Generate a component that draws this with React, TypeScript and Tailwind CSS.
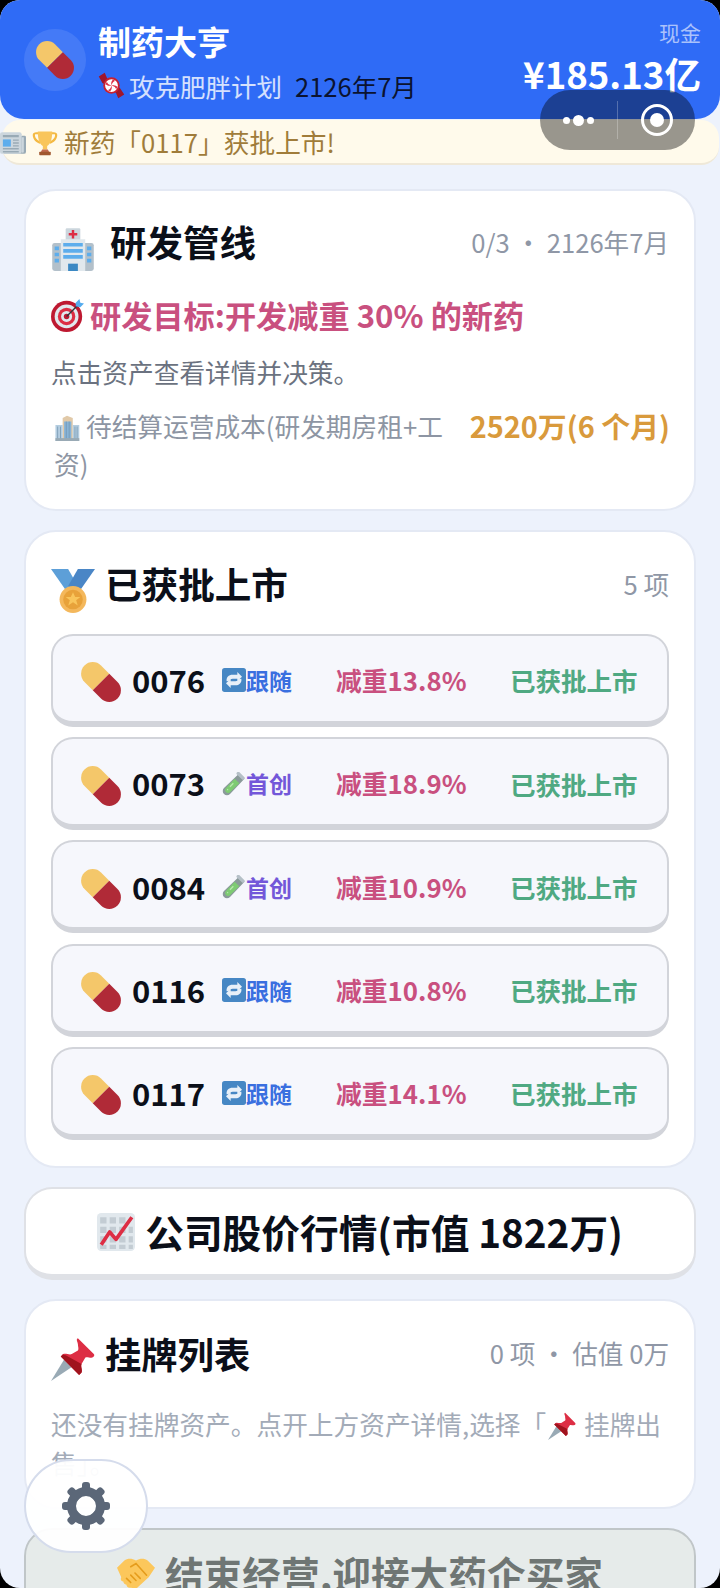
import React from "react";

const Pill = ({ className }: { className?: string }) => (
  <svg viewBox="0 0 36 36" className={className}>
    <g transform="rotate(45 18 18)">
      <path d="M18 8H8a10 10 0 0 0 0 20h10z" fill="#f4c76a" />
      <path d="M18 8h10a10 10 0 0 1 0 20H18z" fill="#b02a37" />
    </g>
  </svg>
);

const Candy = ({ className }: { className?: string }) => (
  <svg viewBox="0 0 36 36" className={className}>
    <path d="M1 6l8-5 3 7 10 10 7 3 6 9-8 5-3-7-10-10-8-3z" fill="#a0162b" />
    <circle cx="18" cy="18" r="11" fill="#c9202f" />
    <circle cx="18" cy="18" r="8.500" fill="#fff" />
    <path d="M18 18c-1-4 0-6 2-8l3 2c-2 0-4 2-5 6zm0 0c4-1 6 0 8 2l-2 3c0-2-2-4-6-5zm0 0c1 4 0 6-2 8l-3-2c2 0 4-2 5-6zm0 0c-4 1-6 0-8-2l2-3c0 2 2 4 6 5z" fill="#dd2e44" />
  </svg>
);

const Newspaper = ({ className }: { className?: string }) => (
  <svg viewBox="0 0 36 36" className={className}>
    <path d="M30 8h4a2 2 0 0 1 2 2v20a3 3 0 0 1-3 3H5z" fill="#99aab5" />
    <rect x="0" y="3" width="30" height="30" rx="3" fill="#ccd6dd" />
    <path d="M4 7h22v3H4z" fill="#99aab5" />
    <rect x="4" y="13" width="11" height="10" fill="#5dadec" />
    <path d="M18 13h8v2h-8zM18 17h8v2h-8zM18 21h8v2h-8zM4 25h22v2H4zM4 29h22v2H4z" fill="#99aab5" />
    <path d="M30 10h3v20a1.500 1.500 0 0 1-3 0z" fill="#ccd6dd" />
  </svg>
);

const Trophy = ({ className }: { className?: string }) => (
  <svg viewBox="0 0 36 36" className={className}>
    <path d="M6 3h24c3 0 5 1 5 4 0 6-5 11-10 12l-1-3c4-1 8-5 8-9 0-1-1-1-2-1H6C5 6 4 6 4 7c0 4 4 8 8 9l-1 3C6 18 1 13 1 7c0-3 2-4 5-4z" fill="#f4b942" />
    <path d="M8 2h20c0 12-3 18-7 20v5h-6v-5C11 20 8 14 8 2z" fill="#f9c55b" />
    <path d="M14 27h8l2 4H12z" fill="#c1694f" />
    <rect x="10" y="30" width="16" height="5" rx="1" fill="#a0572f" />
  </svg>
);

const Hospital = ({ className }: { className?: string }) => (
  <svg viewBox="0 0 36 36" className={className}>
    <path d="M13 1h10a1 1 0 0 1 1 1v9H12V2a1 1 0 0 1 1-1z" fill="#ccd6dd" />
    <path d="M17 2.500h2v2.500h2.500v2H19v2.500h-2V7h-2.500V5H17z" fill="#dd2e44" />
    <path d="M1 15a2 2 0 0 1 2-2h30a2 2 0 0 1 2 2v19a2 2 0 0 1-2 2H3a2 2 0 0 1-2-2z" fill="#b3c0ca" />
    <path d="M8 10h20v26H8z" fill="#e1e8ed" />
    <path d="M10 13h16v3H10zM10 18h16v3H10zM10 23h16v3H10zM3 16h3.500v3H3zM3 21h3.500v3H3zM3 26h3.500v3H3zM29.500 16H33v3h-3.500zM29.500 21H33v3h-3.500zM29.500 26H33v3h-3.500z" fill="#5dadec" />
    <path d="M14 30h8v6h-8z" fill="#3b88c3" />
  </svg>
);

const Target = ({ className }: { className?: string }) => (
  <svg viewBox="0 0 36 36" className={className}>
    <circle cx="17" cy="19" r="17" fill="#be1931" />
    <circle cx="17" cy="19" r="13" fill="#e1e8ed" />
    <circle cx="17" cy="19" r="9.500" fill="#dd2e44" />
    <circle cx="17" cy="19" r="6" fill="#e1e8ed" />
    <circle cx="17" cy="19" r="3" fill="#be1931" />
    <path d="M17 19L30 6" stroke="#31373d" strokeWidth="1.500" />
    <path d="M27 4l4-4 1 4 4 1-4 4-5-1z" fill="#55acee" />
  </svg>
);

const Office = ({ className }: { className?: string }) => (
  <svg viewBox="0 0 36 36" className={className}>
    <path d="M12 4l6-3 8 3v32H12z" fill="#e1c9a8" />
    <path d="M14 9h10v25H14z" fill="#88b4d8" />
    <path d="M2 14h10v22H2zM26 14h9v22h-9z" fill="#b4cde0" />
    <path d="M5 16v18M9 16v18M29 16v18M32 16v18M17 9v25M21 9v25" stroke="#6f93ad" strokeWidth="1" />
    <path d="M2 32h33v4H2z" fill="#99aab5" />
  </svg>
);

const Medal = ({ className }: { className?: string }) => (
  <svg viewBox="0 0 36 36" className={className}>
    <path d="M0 0h14l8 14-8 6z" fill="#5d9fd8" />
    <path d="M36 0H22l-8 14 8 6z" fill="#4a86c6" />
    <circle cx="18" cy="25" r="11" fill="#f4b85c" />
    <circle cx="18" cy="25" r="8" fill="#e8a23a" />
    <path d="M18 19l1.800 4h4.200l-3.400 2.600 1.300 4.200-3.900-2.600-3.900 2.600 1.300-4.200L12 23h4.200z" fill="#f9c55b" />
  </svg>
);

const Repeat = ({ className }: { className?: string }) => (
  <svg viewBox="0 0 36 36" className={className}>
    <rect width="36" height="36" rx="4" fill="#4687c4" />
    <path d="M7 20c-1-6 3-10 9-10h7V6l7 7-7 7v-4h-7c-3 0-4 1-5 3z" fill="#e8f0f8" />
    <path d="M29 16c1 6-3 10-9 10h-7v4l-7-7 7-7v4h7c3 0 4-1 5-3z" fill="#e8f0f8" />
  </svg>
);

const TestTube = ({ className }: { className?: string }) => (
  <svg viewBox="0 0 36 36" className={className}>
    <path d="M25 3l8 8L12 33a6 6 0 0 1-9-9z" fill="#8a9a9a" />
    <path d="M19 10l7 7-15 14a4.500 4.500 0 0 1-6-6z" fill="#7ecb73" />
    <rect x="21" y="3" width="15" height="5" rx="2" transform="rotate(45 28 5)" fill="#b5c0c7" />
    <path d="M12 22l5-5M8 27l1-1" stroke="#b8e8ae" strokeWidth="2" />
  </svg>
);

const Chart = ({ className }: { className?: string }) => (
  <svg viewBox="0 0 36 36" className={className}>
    <rect width="36" height="36" rx="4" fill="#e1e8ed" />
    <path d="M3 4h6v6H3zM12 4h6v6h-6zM21 4h6v6h-6zM3 13h6v6H3zM12 13h6v6h-6zM21 13h6v6h-6zM3 22h6v6H3zM12 22h6v6h-6zM21 22h6v6h-6zM30 13h4v6h-4zM30 22h4v6h-4zM3 30h6v4H3zM12 30h6v4h-6zM21 30h6v4h-6zM30 30h4v4h-4z" fill="#c3ccd3" />
    <path d="M4 30l8-12 6 7L33 4" fill="none" stroke="#dd2e44" strokeWidth="3.500" strokeLinejoin="round" />
  </svg>
);

const Pushpin = ({ className }: { className?: string }) => (
  <svg viewBox="0 0 36 36" className={className}>
    <path d="M0 36l11-18 7 6z" fill="#99aab5" />
    <path d="M22 1l13 13c1 1 0 3-2 3-2 0-4-1-5 0l-3 5c-1 2 1 5 0 7l-2 2L8 16l2-2c2-1 5 1 7 0l5-3c1-1 0-3 0-5s-2-4 0-5z" fill="#dd2e44" />
    <path d="M8 16l15 15 2-2c1-2-1-5 0-7L12 15c-2 0-3-1-2-1z" fill="#a0141e" />
  </svg>
);

const Handshake = ({ className }: { className?: string }) => (
  <svg viewBox="0 0 36 36" className={className}>
    <path d="M0 14l7-7c3-2 7-2 11 0 4-2 8-2 11 0l7 7-6 9-12 11c-2 1-4 0-4-1l-2 0c-2 0-3-2-3-3-2 0-3-2-3-3-2 0-3-2-2-4z" fill="#fcc75b" />
    <path d="M13 13l5-3 10 11M9 24l4 4M13 21l5 5M17 19l5 5" fill="none" stroke="#e59c1c" strokeWidth="1.500" strokeLinecap="round" />
  </svg>
);

const Gear = ({ className }: { className?: string }) => (
  <svg viewBox="0 0 48 48" className={className}>
    {[0, 45, 90, 135, 180, 225, 270, 315].map((deg) => (
      <rect key={deg} x="20" y="0" width="8" height="14" rx="3" fill="#5b6778" transform={`rotate(${deg} 24 24)`} />
    ))}
    <circle cx="24" cy="24" r="14.500" fill="none" stroke="#5b6778" strokeWidth="9" />
  </svg>
);

const drugs = [
  { id: "0076", kind: "follow", change: "减重13.8%" },
  { id: "0073", kind: "first", change: "减重18.9%" },
  { id: "0084", kind: "first", change: "减重10.9%" },
  { id: "0116", kind: "follow", change: "减重10.8%" },
  { id: "0117", kind: "follow", change: "减重14.1%" },
];

function DrugRow({ id, kind, change }: { id: string; kind: string; change: string }) {
  return (
    <div className="flex h-[93px] items-center rounded-[22px] border-2 border-b-[6px] border-[#d2d4da] bg-[#f6f7fc] pl-[27px] pt-[4px]">
      <Pill className="h-[42px] w-[42px] shrink-0 translate-y-[2px]" />
      <div className="ml-[10px] w-[90px] text-[31px] font-bold text-[#0b0f19]">{id}</div>
      {kind === "follow" ? (
        <div className="flex w-[114px] items-center text-[23px] font-bold text-[#3a6fe0]">
          <Repeat className="h-[24px] w-[24px]" />
          跟随
        </div>
      ) : (
        <div className="flex w-[114px] items-center text-[23px] font-bold text-[#7357d9]">
          <TestTube className="h-[24px] w-[24px]" />
          首创
        </div>
      )}
      <div className="w-[174px] text-[25.800px] font-bold text-[#c9507f]">{change}</div>
      <div className="text-[25.500px] font-bold text-[#4fa982]">已获批上市</div>
    </div>
  );
}

export default function App() {
  return (
    <div className="h-[1588px] w-[720px] overflow-hidden bg-black font-['Noto_Sans_CJK_SC','Noto_Sans',sans-serif]">
      <div className="relative h-full overflow-hidden rounded-[20px] bg-[#edf2fc]">
        {/* Header */}
        <div className="flex h-[119px] items-center justify-between rounded-b-[24px] bg-[#2f6bf6] pl-[24px] pr-[19px]">
          <div className="flex items-center gap-[12px]">
            <div className="flex h-[62px] w-[62px] items-center justify-center rounded-full bg-white/10">
              <Pill className="h-[40px] w-[40px]" />
            </div>
            <div className="flex flex-col pt-[3px]">
              <div className="text-[33px] font-bold leading-[46px] text-white">制药大亨</div>
              <div className="mt-[3px] flex items-center text-[25.500px] leading-[38px]">
                <Candy className="mr-[4px] h-[27px] w-[27px]" />
                <span className="text-white/80">攻克肥胖计划</span>
                <span className="ml-[13px] text-[#0b1330]">2126年7月</span>
              </div>
            </div>
          </div>
          <div className="flex flex-col items-end">
            <div className="-mt-[4px] text-[21px] leading-[30px] text-white/60">现金</div>
            <div className="mt-[2px] text-[36.600px] font-bold leading-[50px] text-white">¥185.13亿</div>
          </div>
        </div>

        {/* Notice */}
        <div className="mt-px ml-[2px] mr-[1px] flex h-[45px] items-center rounded-[18px] border-b-2 border-[#efe8d8] bg-[#fffaeb] pt-[2px] text-[25.700px] text-[#a07c3a]">
          <Newspaper className="-ml-[2px] h-[26px] w-[26px]" />
          <Trophy className="ml-[6px] mr-[6px] h-[26px] w-[26px]" />
          新药「0117」获批上市!
        </div>

        <div className="flex flex-col gap-[19px] px-[24px] pt-[24px]">
          {/* Pipeline */}
          <div className="h-[322px] rounded-[32px] border-2 border-[#e4e9f4] bg-white px-[25px] pt-[24px]">
            <div className="flex items-center justify-between">
              <div className="flex items-center">
                <Hospital className="h-[44px] w-[44px] translate-y-[7px]" />
                <div className="ml-[15px] text-[36.500px] font-bold text-[#0b0f19]">研发管线</div>
              </div>
              <div className="text-[25.600px] text-[#8f97a6]">0/3 ・ 2126年7月</div>
            </div>
            <div className="mt-[22px] flex items-center text-[31.200px] font-bold text-[#c9507f]">
              <Target className="mr-[6px] h-[33px] w-[33px]" />
              研发目标:开发减重 30% 的新药
            </div>
            <div className="mt-[14px] text-[25.700px] text-[#6b7280]">点击资产查看详情并决策。</div>
            <div className="mt-[16px] -mr-px flex items-start justify-between">
              <div className="ml-[3px] w-[396px] text-[25.700px] leading-[37px] text-[#8d95a3]">
                <Office className="mb-[4px] mr-[6px] inline h-[26px] w-[26px]" />
                待结算运营成本(研发期房租+工资)
              </div>
              <div className="text-[28.900px] font-bold leading-[37px] text-[#d99a3c]">2520万(6 个月)</div>
            </div>
          </div>

          {/* Approved */}
          <div className="h-[638px] rounded-[32px] border-2 border-[#e4e9f4] bg-white px-[25px] pt-[25px]">
            <div className="flex items-center justify-between">
              <div className="flex items-center">
                <Medal className="h-[44px] w-[44px] translate-y-[7px]" />
                <div className="ml-[10px] text-[36.600px] font-bold text-[#0b0f19]">已获批上市</div>
              </div>
              <div className="text-[25.600px] text-[#8f97a6]">5 项</div>
            </div>
            <div className="mt-[22px] flex flex-col gap-[10.250px]">
              {drugs.map((d) => (
                <DrugRow key={d.id} {...d} />
              ))}
            </div>
          </div>

          {/* Stock */}
          <div className="flex h-[93px] items-center justify-center rounded-[28px] border-2 border-b-[6px] border-[#dfe1e6] bg-white text-[38.700px] font-bold text-[#0b0f19]">
            <Chart className="mr-[10px] h-[38px] w-[38px]" />
            公司股价行情(市值 1822万)
          </div>

          {/* Listings */}
          <div className="h-[210px] rounded-[32px] border-2 border-[#e4e9f4] bg-white px-[25px] pt-[25px]">
            <div className="flex items-center justify-between">
              <div className="flex items-center">
                <Pushpin className="h-[44px] w-[44px] translate-y-[6px]" />
                <div className="ml-[10px] text-[36.300px] font-bold text-[#0b0f19]">挂牌列表</div>
              </div>
              <div className="text-[25.600px] text-[#8f97a6]">0 项 ・ 估值 0万</div>
            </div>
            <div className="mt-[25px] text-[25.700px] leading-[37px] text-[#a3abb8]">
              还没有挂牌资产。点开上方资产详情,选择「
              <Pushpin className="mx-[2px] mb-[4px] inline h-[28px] w-[28px]" /> 挂牌出售」。
            </div>
          </div>

          {/* Sell company */}
          <div className="flex h-[93px] items-start justify-center rounded-[28px] border-2 border-[#c0c6c8] bg-[#e6ebea] pt-[14px] text-[38.700px] font-bold text-[#6f7674]">
            <Handshake className="mr-[10px] mt-[9px] h-[38px] w-[38px]" />
            结束经营,迎接大药企买家
          </div>
        </div>

        {/* Floating settings */}
        <div className="absolute left-[24px] top-[1459px] flex h-[94px] w-[124px] items-center justify-center rounded-[47px] border-2 border-[#d5dcec] bg-white/95">
          <Gear className="h-[48px] w-[48px]" />
        </div>

        {/* Mini program capsule */}
        <div className="absolute left-[540px] top-[90px] flex h-[60px] w-[155px] items-center rounded-full bg-black/40">
          <div className="flex w-[77px] items-center justify-center gap-[3px]">
            <span className="h-[7px] w-[7px] rounded-full bg-white" />
            <span className="h-[11px] w-[11px] rounded-full bg-white" />
            <span className="h-[7px] w-[7px] rounded-full bg-white" />
          </div>
          <div className="h-[38px] w-px bg-white/25" />
          <div className="flex flex-1 items-center justify-center">
            <div className="flex h-[32px] w-[32px] items-center justify-center rounded-full border-[3px] border-white">
              <span className="h-[14px] w-[14px] rounded-full bg-white" />
            </div>
          </div>
        </div>
      </div>
    </div>
  );
}
